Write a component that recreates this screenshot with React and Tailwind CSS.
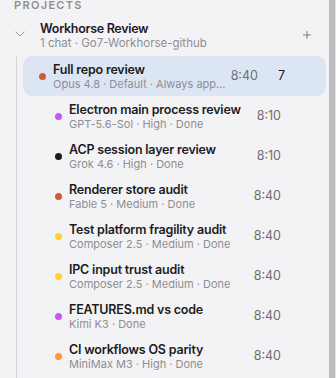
import { ChevronDown, Plus } from "lucide-react";

const chats = [
  { title: "Electron main process review", meta: "GPT-5.6-Sol · High · Done", time: "8:10", dot: "bg-[#bf5af2]" },
  { title: "ACP session layer review", meta: "Grok 4.6 · High · Done", time: "8:10", dot: "bg-[#1c1c1e]" },
  { title: "Renderer store audit", meta: "Fable 5 · Medium · Done", time: "8:40", dot: "bg-[#cf5a3d]" },
  { title: "Test platform fragility audit", meta: "Composer 2.5 · Medium · Done", time: "8:40", dot: "bg-[#ffd02e]" },
  { title: "IPC input trust audit", meta: "Composer 2.5 · Medium · Done", time: "8:40", dot: "bg-[#ffd02e]" },
  { title: "FEATURES.md vs code", meta: "Kimi K3 · Done", time: "8:40", dot: "bg-[#bf5af2]" },
  { title: "CI workflows OS parity", meta: "MiniMax M3 · High · Done", time: "8:40", dot: "bg-[#ff9a2e]" },
];

export default function App() {
  return (
    <div
      className="w-[336px] h-[378px] flex bg-[#f3f3f5] overflow-hidden"
      style={{ fontFamily: "Inter, 'Noto Sans', sans-serif" }}
    >
      <div className="w-[329px] flex flex-col">

        {/* Section heading */}
        <div className="shrink-0 pl-[14px] h-[12px] text-[11px] font-semibold tracking-[0.12em] leading-[11px] text-[#8e8e93]">
          PROJECTS
        </div>

        {/* Project header */}
        <div className="shrink-0 flex items-start h-[35px] mt-[9px]">
          <ChevronDown className="ml-[12px] mt-[5px] w-[16px] h-[16px] text-[#8e8e93]" strokeWidth={1.4} />
          <div className="ml-[12px] flex-1 min-w-0">
            <div className="text-[12.5px] font-semibold tracking-[-0.3px] leading-[15px] text-[#1c1c1e]">
              Workhorse Review
            </div>
            <div className="text-[11.5px] leading-[14px] text-[#8e8e93]">
              1 chat · Go7-Workhorse-github
            </div>
          </div>
          <Plus className="mr-[16px] mt-[8px] w-[12px] h-[12px] text-[#636366]" strokeWidth={1.6} />
        </div>

        {/* Chat list */}
        <div className="shrink-0 ml-[16px] border-l border-[#d4d4d8] pl-[6px] pb-[6px]">

          {/* Selected */}
          <div className="flex items-center h-[40px] w-[303px] rounded-[9px] bg-[#dce5f3] pl-[16px] pr-[41px]">
            <span className="w-[7px] h-[7px] rounded-full bg-[#cf5a3d] shrink-0" />
            <div className="ml-[7px] flex-1 min-w-0">
              <div className="text-[12.5px] font-semibold tracking-[-0.2px] leading-[15px] text-[#1c1c1e] truncate">
                Full repo review
              </div>
              <div className="text-[11px] leading-[14px] text-[#8e8e93] truncate pr-[2px]">
                Opus 4.8 · Default · Always approve
              </div>
            </div>
            <span className="text-[12.5px] text-[#6e6e73] shrink-0">8:40</span>
            <span className="ml-[20px] text-[12.5px] text-[#1c1c1e] shrink-0">7</span>
          </div>

          {chats.map((item, index) => (
            <div
              key={index}
              className="flex items-center h-[40px] w-[303px] pl-[32px] pr-[45px]"
            >
              <span className={`w-[7px] h-[7px] rounded-full shrink-0 ${item.dot}`} />
              <div className="ml-[7px] flex-1 min-w-0">
                <div className="text-[12.5px] font-semibold tracking-[-0.2px] leading-[15px] text-[#1c1c1e] truncate">
                  {item.title}
                </div>
                <div className="text-[11px] leading-[14px] text-[#8e8e93] truncate">
                  {item.meta}
                </div>
              </div>
              <span className="text-[12.5px] text-[#6e6e73] shrink-0">{item.time}</span>
            </div>
          ))}
        </div>
      </div>

      {/* Right edge */}
      <div className="w-[6px] bg-[#bdbdc0]" />
      <div className="w-[1px] bg-[#e6e6e8]" />
    </div>
  );
}
